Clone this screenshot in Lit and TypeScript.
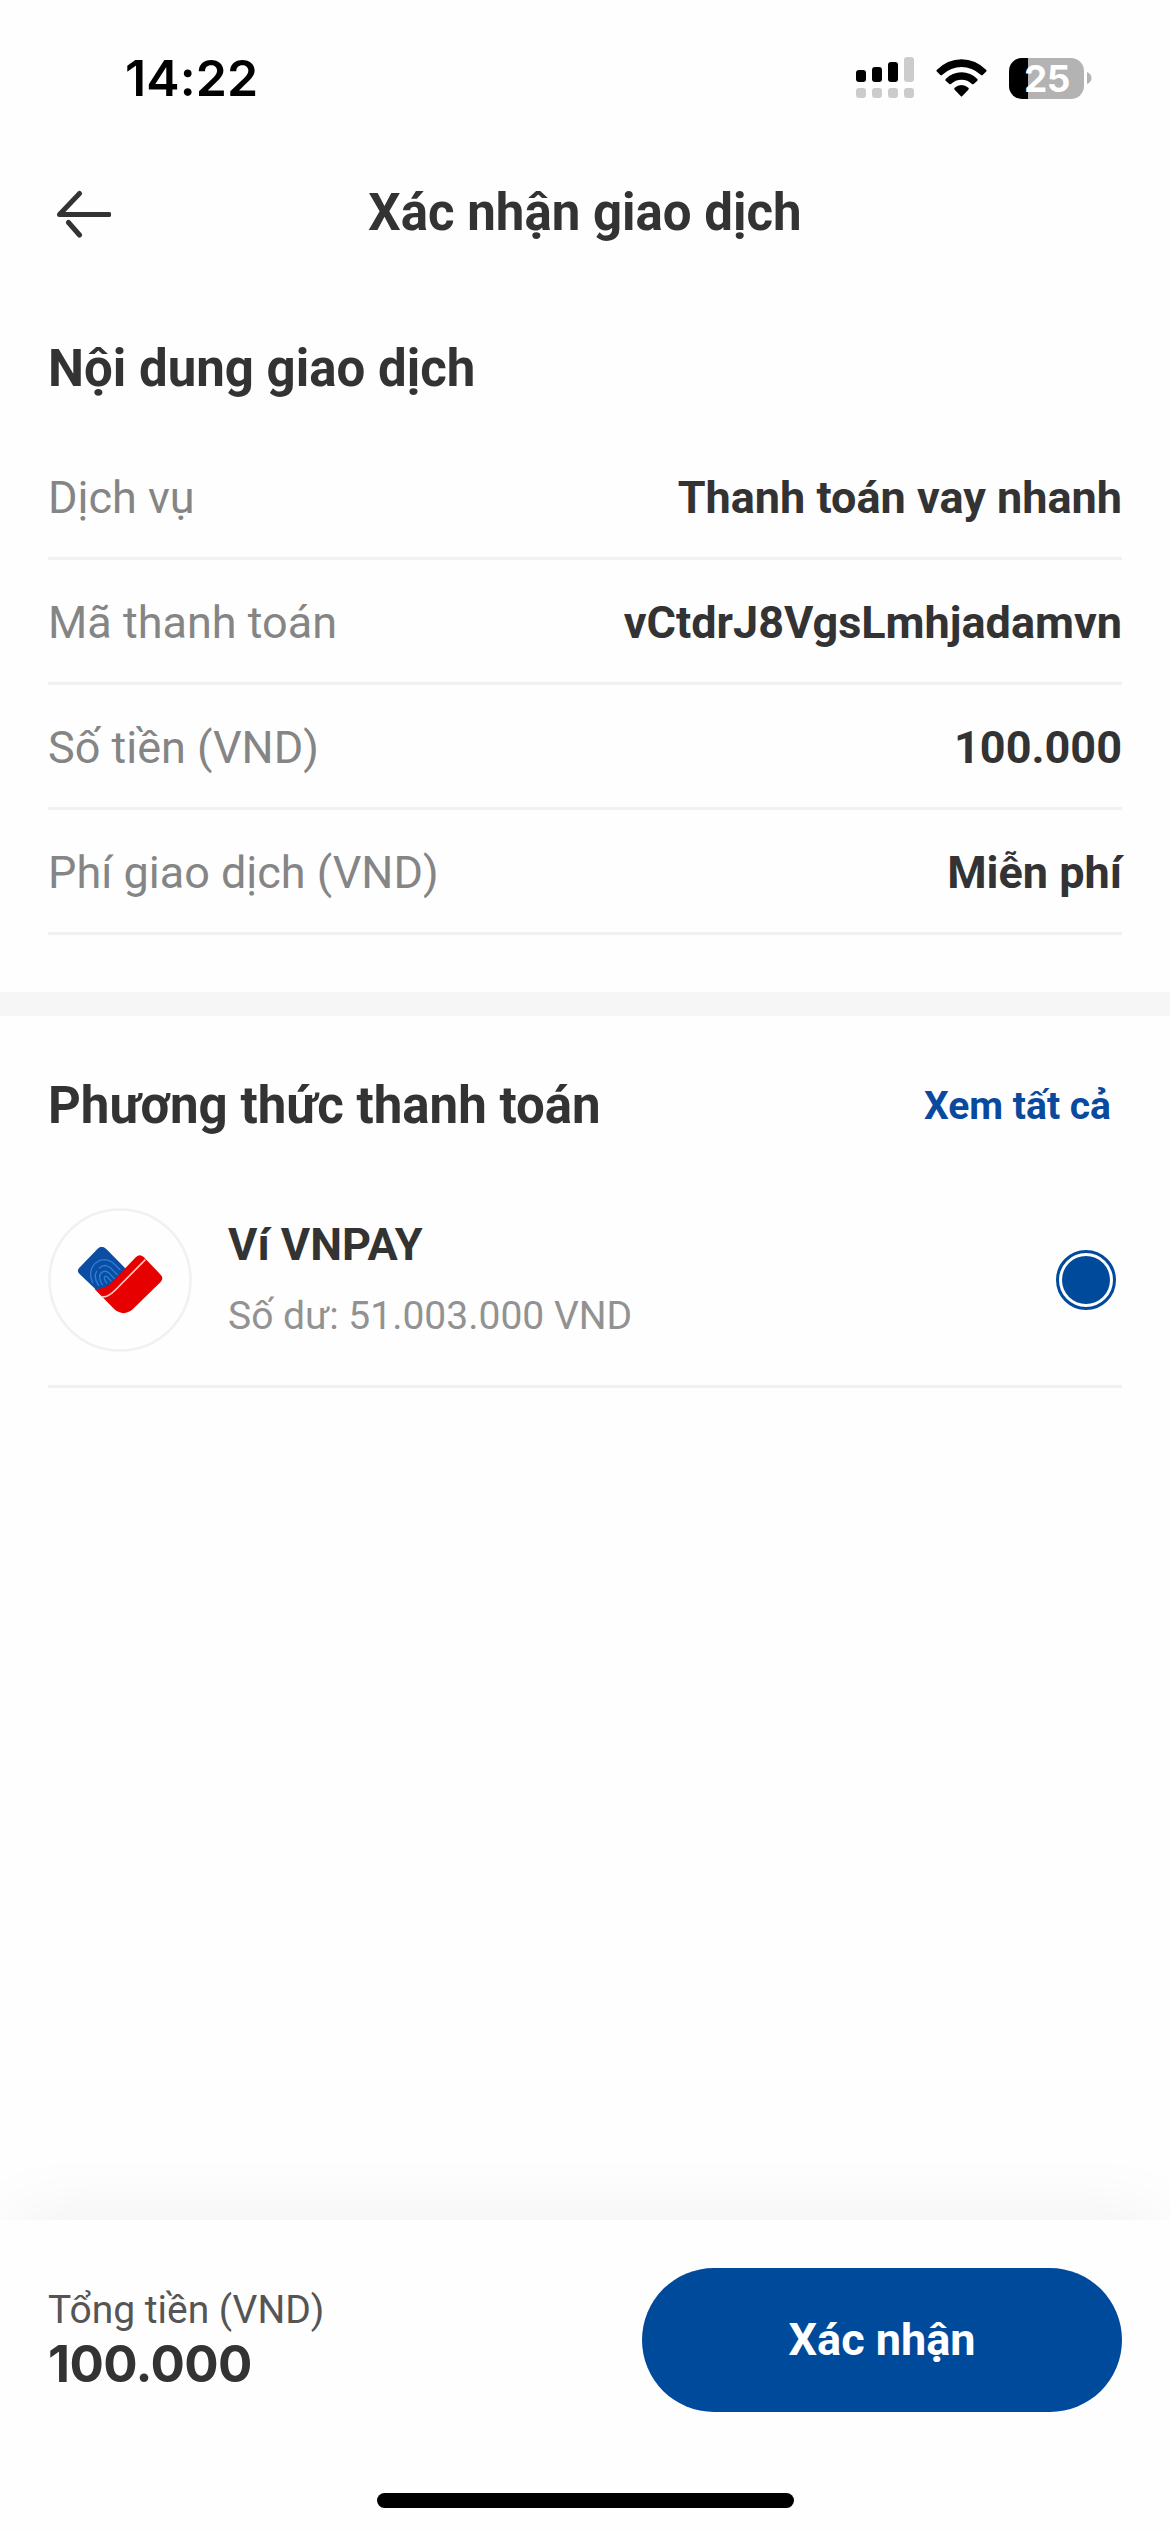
import { LitElement, html, css } from "lit";
import { customElement, property } from "lit/decorators.js";

const ROWS: [string, string][] = [
  ["Dịch vụ", "Thanh toán vay nhanh"],
  ["Mã thanh toán", "vCtdrJ8VgsLmhjadamvn"],
  ["Số tiền (VND)", "100.000"],
  ["Phí giao dịch (VND)", "Miễn phí"],
];

@customElement("status-bar")
class StatusBar extends LitElement {
  static styles = css`
    :host {
      display: flex;
      align-items: center;
      justify-content: space-between;
      height: 156px;
      padding: 0 78px 0 125px;
      box-sizing: border-box;
      font-family: Inter, sans-serif;
      color: #000;
    }
    .clock { font-size: 50px; font-weight: 600; line-height: 60px; letter-spacing: 0.1px; }
    .icons { display: flex; align-items: center; }
    .signal { margin-right: 22px; }
    .wifi { margin-right: 22px; }
    svg { display: block; }
    .battery { display: flex; align-items: center; gap: 3px; }
    .cell {
      width: 75px;
      height: 41px;
      border-radius: 13px;
      background: linear-gradient(90deg, #000 19px, #b3b3b3 19px);
      color: #fff;
      font-size: 37px;
      font-weight: 700;
      line-height: 41px;
      text-align: center;
      text-indent: 1px;
      letter-spacing: -0.5px;
    }
  `;
  render() {
    return html`
      <div class="clock">14:22</div>
      <div class="icons">
        <svg class="signal" width="58" height="42" viewBox="0 0 58 42">
          <g fill="#000">
            <rect x="0" y="13" width="10" height="12" rx="3" />
            <rect x="16" y="10" width="10" height="15" rx="3" />
            <rect x="32" y="5" width="10" height="20" rx="3" />
          </g>
          <g fill="#ccc">
            <rect x="48" y="0" width="10" height="25" rx="3" />
            <rect x="0" y="31" width="10" height="10" rx="3" />
            <rect x="16" y="31" width="10" height="10" rx="3" />
            <rect x="32" y="31" width="10" height="10" rx="3" />
            <rect x="48" y="31" width="10" height="10" rx="3" />
          </g>
        </svg>
        <svg class="wifi" width="51" height="38" viewBox="0 0 153 114">
          <path d="M2 33 Q0 36 3 38 L13 48 Q16 50 19 47 Q45 24 76.5 24 Q108 24 134 47 Q137 50 140 48 L150 38 Q153 36 151 33 Q118 1 76.5 1 Q35 1 2 33Z" />
          <path d="M29 60 Q27 63 29 65 L40 75 Q42 77 45 75 Q58 62 76.5 62 Q95 62 108 75 Q111 77 113 75 L124 65 Q126 63 124 60 Q104 40 76.5 40 Q49 40 29 60Z" />
          <path d="M56 86 Q53 89 56 92 L74 111 Q76.500 114 79 111 L97 92 Q100 89 97 86 Q88 78 76.500 78 Q65 78 56 86Z" />
        </svg>
        <div class="battery">
          <div class="cell">25</div>
          <svg width="5" height="14" viewBox="0 0 5 14">
            <path d="M0 1 Q4.500 3 4.500 7 T0 13Z" fill="#b3b3b3" />
          </svg>
        </div>
      </div>
    `;
  }
}

@customElement("detail-row")
class DetailRow extends LitElement {
  @property() label = "";
  @property() value = "";
  static styles = css`
    :host {
      display: flex;
      align-items: center;
      justify-content: space-between;
      height: 125px;
      box-sizing: border-box;
      padding-top: 3px;
      border-bottom: 3px solid #f1f1f1;
      font-size: 45px;
      line-height: 60px;
    }
    .label { color: #858585; }
    .value { color: #333; font-weight: 700; }
  `;
  render() {
    return html`<span class="label">${this.label}</span><span class="value">${this.value}</span>`;
  }
}

@customElement("wallet-logo")
class WalletLogo extends LitElement {
  static styles = css`
    :host { display: block; width: 144px; height: 144px; }
    svg { display: block; }
  `;
  render() {
    return html`
      <svg width="144" height="144" viewBox="54 54 432 432" fill="none">
        <defs>
          <clipPath id="blue">
            <path d="M203 176 Q215 164 228 176 L288 237 L244 281 Q220 302 196 297 L148 251 Q139 242 148 233Z" />
          </clipPath>
        </defs>
        <circle cx="270" cy="270" r="211.500" stroke="#f1f1f1" stroke-width="8" />
        <g clip-path="url(#blue)">
          <rect x="130" y="160" width="170" height="150" fill="#0b4da2" />
          <g stroke="#2a7fd8" stroke-width="4" stroke-linecap="round">
            <path d="M188 278 Q174 246 192 224 Q206 209 224 209 Q242 211 254 223 L270 239" />
            <path d="M206 286 Q189 262 200 244 M208 234 Q223 219 242 234 L262 254" />
            <path d="M217 284 Q203 262 213 249 Q225 238 238 250 L253 266" />
            <path d="M230 279 Q220 266 224 260 Q229 256 235 264 L243 273" />
          </g>
        </g>
        <path fill="#e60000" d="M193 296 Q221 301 246 276 L318 201 Q329 190 341 201 L392 254 Q402 265 392 276 L308 358 Q281 381 253 358Z" />
        <path stroke="#ffc9c0" stroke-width="5" d="M216 320 Q232 324 256 300 L346 209" />
      </svg>
    `;
  }
}

@customElement("app-root")
class AppRoot extends LitElement {
  static styles = css`
    :host {
      display: flex;
      flex-direction: column;
      width: 1170px;
      height: 2532px;
      overflow: hidden;
      background: #fefefe;
      font-family: Roboto, sans-serif;
      color: #333;
    }
    .header {
      display: grid;
      grid-template-columns: 54px 1fr 54px;
      align-items: center;
      height: 114px;
      padding: 0 57px;
    }
    .back { display: block; }
    .title { text-align: center; font-size: 51px; font-weight: 700; line-height: 60px; }
    .details { padding: 69px 48px 57px; }
    .heading { font-size: 51px; font-weight: 700; line-height: 60px; }
    .rows { margin-top: 36px; }
    .band { height: 24px; background: #f6f6f6; }
    .methods { padding: 60px 48px 0; }
    .methods-head { display: flex; justify-content: space-between; align-items: center; padding-right: 11px; }
    .all { color: #0a4a9e; font-size: 39px; font-weight: 700; line-height: 60px; }
    .method {
      display: flex;
      align-items: center;
      margin-top: 72px;
      padding: 0 6px 33px 0;
      border-bottom: 3px solid #f1f1f1;
    }
    .info { display: flex; flex-direction: column; gap: 11px; flex: 1; margin-left: 36px; }
    .name { font-size: 45px; font-weight: 700; line-height: 60px; }
    .balance { font-size: 39px; line-height: 60px; color: #929292; }
    .radio {
      width: 48px;
      height: 48px;
      padding: 3px;
      border: 3px solid #004a9c;
      border-radius: 50%;
      background: #004a9c content-box;
    }
    .footer {
      display: flex;
      flex-direction: column;
      height: 312px;
      box-sizing: border-box;
      margin-top: auto;
      padding: 48px 48px 0;
      background: #fefefe;
      box-shadow: 0 -20px 66px -12px rgba(0, 0, 0, 0.05);
    }
    .pay { display: flex; justify-content: space-between; align-items: flex-start; }
    .total { padding-top: 15px; }
    .total-label { font-size: 39px; line-height: 54px; color: #555; }
    .total-value { font-family: Inter, sans-serif; font-size: 51px; font-weight: 700; line-height: 54px; letter-spacing: -0.6px; }
    .confirm {
      width: 480px;
      height: 144px;
      border: 0;
      border-radius: 72px;
      background: #004a9c;
      color: #fff;
      font: 700 45px/60px Roboto, sans-serif;
    }
    .home { width: 417px; height: 15px; margin: 81px auto 0; border-radius: 8px; background: #000; }
  `;
  render() {
    return html`
      <status-bar></status-bar>
      <div class="header">
        <svg class="back" width="54" height="54" viewBox="0 0 54 54" fill="none" stroke="#333" stroke-width="5" stroke-linecap="round" stroke-linejoin="round">
          <path d="M52 28.500H2.500L22.500 7.500M11.500 36.500L22.500 49" />
        </svg>
        <div class="title">Xác nhận giao dịch</div>
      </div>
      <div class="details">
        <div class="heading">Nội dung giao dịch</div>
        <div class="rows">
          ${ROWS.map(([l, v]) => html`<detail-row .label=${l} .value=${v}></detail-row>`)}
        </div>
      </div>
      <div class="band"></div>
      <div class="methods">
        <div class="methods-head">
          <div class="heading">Phương thức thanh toán</div>
          <div class="all">Xem tất cả</div>
        </div>
        <div class="method">
          <wallet-logo></wallet-logo>
          <div class="info">
            <div class="name">Ví VNPAY</div>
            <div class="balance">Số dư: 51.003.000 VND</div>
          </div>
          <div class="radio"></div>
        </div>
      </div>
      <div class="footer">
        <div class="pay">
          <div class="total">
            <div class="total-label">Tổng tiền (VND)</div>
            <div class="total-value">100.000</div>
          </div>
          <button class="confirm">Xác nhận</button>
        </div>
        <div class="home"></div>
      </div>
    `;
  }
}
